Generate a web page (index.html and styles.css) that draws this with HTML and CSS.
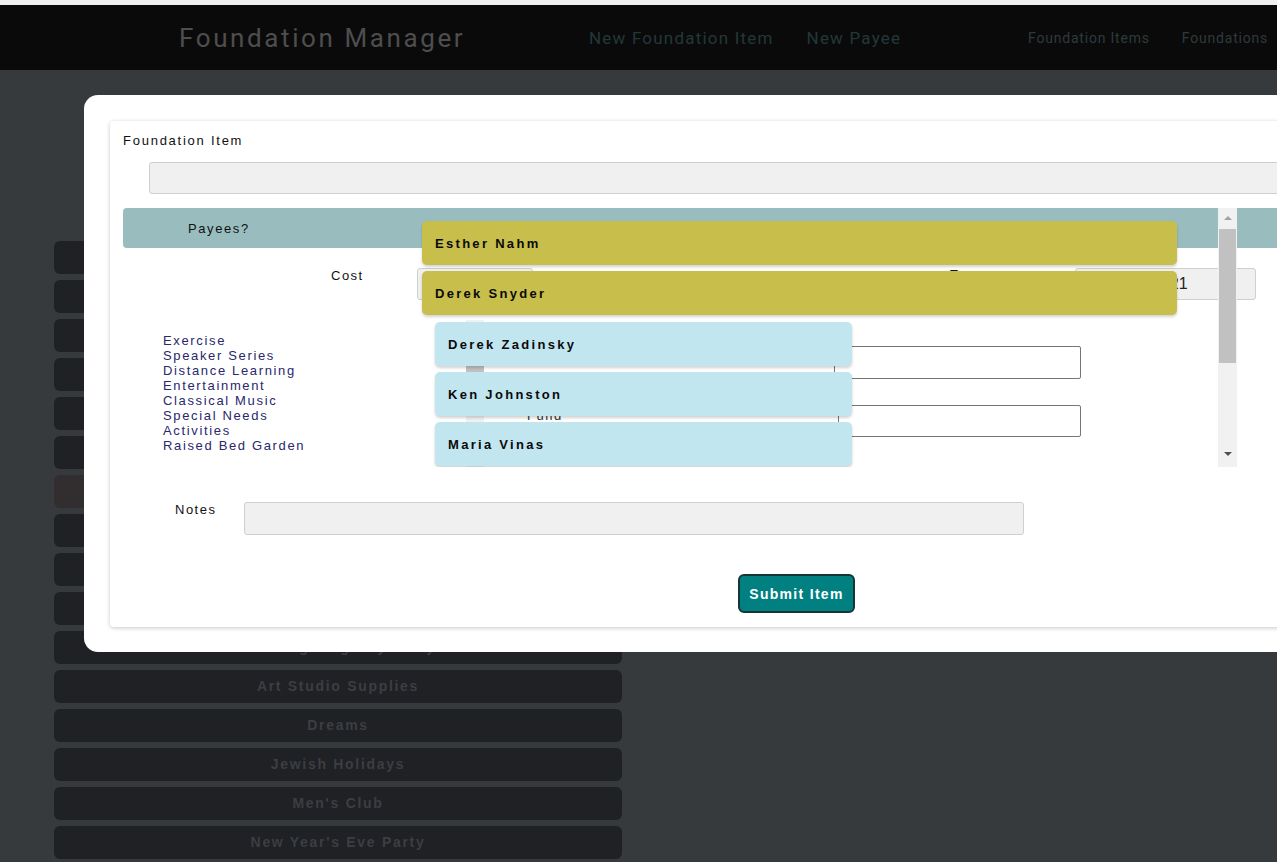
FILE: index.html
```html
<!DOCTYPE html>
<html lang="en">
<head>
<meta charset="utf-8">
<title>Foundation Manager</title>
<link rel="stylesheet" href="styles.css">
</head>
<body>
<div class="topline"></div>
<header class="header">
  <div class="brand">Foundation Manager</div>
  <nav class="nav-main">
    <a class="nav-big nav-first">New Foundation Item</a>
    <a class="nav-big">New Payee</a>
  </nav>
  <nav class="nav-side">
    <a class="nav-small">Foundation Items</a>
    <a class="nav-small">Foundations</a>
  </nav>
</header>

<main class="list">
  <div class="fbtn">Exercise</div>
  <div class="fbtn">Speaker Series</div>
  <div class="fbtn">Distance Learning</div>
  <div class="fbtn">Entertainment</div>
  <div class="fbtn">Classical Music</div>
  <div class="fbtn">Special Needs</div>
  <div class="fbtn fbtn-alt">Activities</div>
  <div class="fbtn">Raised Bed Garden</div>
  <div class="fbtn">Music Therapy</div>
  <div class="fbtn">Baking Club</div>
  <div class="fbtn">Thanksgiving Day Party</div>
  <div class="fbtn">Art Studio Supplies</div>
  <div class="fbtn">Dreams</div>
  <div class="fbtn">Jewish Holidays</div>
  <div class="fbtn">Men's Club</div>
  <div class="fbtn">New Year's Eve Party</div>
</main>

<div class="modal">
  <div class="card">
    <div class="lbl lbl-title">Foundation Item</div>
    <div class="inp inp-item"></div>
    <div class="payees-bar">Payees?</div>

    <div class="row-cost">
      <div class="lbl lbl-cost">Cost</div>
      <div class="inp inp-cost"></div>
      <div class="lbl lbl-total">Tax</div>
      <div class="inp inp-total">2021</div>
    </div>

    <div class="mid">
      <div class="cats">
        <div class="cats-text">
          <div>Exercise</div>
          <div>Speaker Series</div>
          <div>Distance Learning</div>
          <div>Entertainment</div>
          <div>Classical Music</div>
          <div>Special Needs</div>
          <div>Activities</div>
          <div>Raised Bed Garden</div>
        </div>
        <div class="cats-scroll"><div class="cats-thumb"></div></div>
      </div>
      <div class="fields">
        <div class="field field-1">
          <div class="lbl lbl-field">Purpose</div>
          <div class="box box-1"></div>
        </div>
        <div class="field field-2">
          <div class="lbl lbl-field">Fund</div>
          <div class="box box-2"></div>
        </div>
      </div>
    </div>

    <div class="row-notes">
      <div class="lbl lbl-notes">Notes</div>
      <div class="inp inp-notes"></div>
    </div>

    <div class="row-submit">
      <button class="submit">Submit Item</button>
    </div>

    <div class="dropdown">
      <div class="plist">
        <div class="pcard pcard-sel">Esther Nahm</div>
        <div class="pcard pcard-sel">Derek Snyder</div>
        <div class="pcard pcard-opt pcard-first">Derek Zadinsky</div>
        <div class="pcard pcard-opt">Ken Johnston</div>
        <div class="pcard pcard-opt">Maria Vinas</div>
      </div>
      <div class="vscroll">
        <div class="arrow-up"></div>
        <div class="vthumb"></div>
        <div class="arrow-down"></div>
      </div>
    </div>
  </div>
</div>
</body>
</html>
```

FILE: styles.css
```css
html, body {
  margin: 0;
  padding: 0;
  overflow: hidden;
  height: 862px;
}
body {
  background: #363a3d;
  font-family: "Liberation Sans", Arial, sans-serif;
  position: relative;
}
.topline {
  height: 5px;
  background: #f0f0f0;
}
.header {
  height: 65px;
  background: #0b0a0a;
  display: flex;
  align-items: center;
  font-family: Roboto, "Liberation Sans", sans-serif;
  white-space: nowrap;
}
.brand {
  flex: none;
  margin-left: 179px;
  width: 410px;
  font-size: 26px;
  letter-spacing: 2.6px;
  color: #4e4e4e;
}
.nav-main {
  flex: none;
  display: flex;
  width: 439px;
}
.nav-big {
  font-size: 17px;
  letter-spacing: 1.2px;
  color: #223838;
  margin-right: 33px;
}
.nav-side {
  flex: none;
  display: flex;
}
.nav-small {
  font-size: 14px;
  letter-spacing: 0.8px;
  color: #2d3b3d;
  margin-right: 32px;
}

.list {
  margin-top: 171px;
  padding-left: 54px;
  display: flex;
  flex-direction: column;
  gap: 6px;
}
.fbtn {
  width: 568px;
  height: 33px;
  box-sizing: border-box;
  padding-bottom: 2px;
  border-radius: 6px;
  background: #1f2124;
  color: #3b3e43;
  font-weight: bold;
  font-size: 14px;
  letter-spacing: 1.7px;
  display: flex;
  align-items: center;
  justify-content: center;
}
.fbtn-alt {
  background: #322d2e;
}

.modal {
  position: absolute;
  left: 84px;
  top: 95px;
  width: 1320px;
  background: #ffffff;
  border-radius: 14px;
  padding: 26px 0 25px 26px;
}
.card {
  position: relative;
  width: 1260px;
  height: 506px;
  box-sizing: border-box;
  padding-top: 12px;
  border-radius: 4px;
  background: #fff;
  box-shadow: 0 1px 4px rgba(0,0,0,0.22);
}
.lbl {
  font-size: 13px;
  line-height: 15px;
  letter-spacing: 1.5px;
  color: #111;
}
.lbl-title {
  margin-left: 13px;
  letter-spacing: 1.75px;
}
.inp {
  background: #f0f0f0;
  border: 1px solid #cfcfcf;
  border-radius: 3px;
  box-sizing: border-box;
}
.inp-item {
  margin: 14px 0 0 39px;
  height: 32px;
  width: 1200px;
}
.payees-bar {
  margin: 14px 0 0 13px;
  height: 40px;
  width: 1240px;
  background: #99bdbf;
  border-radius: 4px;
  display: flex;
  align-items: center;
  padding-left: 65px;
  box-sizing: border-box;
  font-size: 13px;
  letter-spacing: 1.6px;
  color: #111;
}
.row-cost {
  margin-top: 20px;
  display: flex;
  align-items: flex-start;
  height: 32px;
}
.lbl-cost {
  margin-left: 221px;
  width: 86px;
}
.inp-cost {
  width: 116px;
  height: 32px;
}
.lbl-total {
  margin-left: 417px;
  margin-top: -1px;
  width: 125px;
}
.inp-total {
  width: 181px;
  height: 32px;
  font-size: 16px;
  line-height: 30px;
  padding-left: 76px;
  color: #222;
}
.mid {
  margin: 20px 0 0 45px;
  display: flex;
  height: 147px;
}
.cats {
  width: 329px;
  display: flex;
}
.cats-text {
  flex: 1;
  padding: 13px 0 0 8px;
  font-size: 13px;
  line-height: 15px;
  letter-spacing: 1.65px;
  color: #28286b;
}
.cats-scroll {
  width: 18px;
  background: #f1f1f1;
  padding-top: 22px;
  box-sizing: border-box;
}
.cats-thumb {
  height: 70px;
  background: #c1c1c1;
}
.fields {
  margin-left: 43px;
  width: 554px;
  padding-top: 26px;
  display: flex;
  flex-direction: column;
  gap: 26px;
}
.field {
  display: flex;
  justify-content: space-between;
  align-items: flex-start;
}
.lbl-field {
  padding-top: 3px;
  color: #333;
}
.box {
  border: 1px solid #767676;
  border-radius: 2px;
  background: #fff;
  box-sizing: border-box;
}
.box-1 {
  width: 247px;
  height: 33px;
}
.box-2 {
  width: 243px;
  height: 32px;
}
.row-notes {
  margin-top: 35px;
  display: flex;
  align-items: flex-start;
}
.lbl-notes {
  margin-left: 65px;
  width: 69px;
}
.inp-notes {
  width: 780px;
  height: 33px;
}
.row-submit {
  margin-top: 39px;
  padding-left: 628px;
}
.submit {
  width: 117px;
  height: 39px;
  background: #008080;
  border: 2px solid #163636;
  border-radius: 6px;
  color: #fff;
  font-family: "Liberation Sans", Arial, sans-serif;
  font-weight: bold;
  font-size: 14px;
  letter-spacing: 1.3px;
  padding: 0;
}

.dropdown {
  position: absolute;
  left: 300px;
  top: 87px;
  width: 827px;
  height: 259px;
  overflow: hidden;
  display: flex;
}
.plist {
  flex: 1;
  padding-top: 13px;
  display: flex;
  flex-direction: column;
  gap: 6px;
}
.pcard {
  flex: none;
  height: 44px;
  border-radius: 5px;
  box-shadow: 0 2px 3px rgba(0,0,0,0.18);
  display: flex;
  align-items: center;
  padding-left: 13px;
  box-sizing: border-box;
  font-weight: bold;
  font-size: 13px;
  letter-spacing: 2.3px;
  color: #0a0a0a;
}
.pcard-sel {
  margin-left: 12px;
  width: 755px;
  background: #c8be4c;
}
.pcard-opt {
  margin-left: 25px;
  width: 417px;
  background: #c2e6ef;
}
.pcard-first {
  margin-top: 1px;
}
.vscroll {
  width: 19px;
  background: #f1f1f1;
  display: flex;
  flex-direction: column;
  align-items: center;
}
.arrow-up {
  margin-top: 8px;
  width: 0;
  height: 0;
  border-left: 4px solid transparent;
  border-right: 4px solid transparent;
  border-bottom: 4px solid #a3a3a3;
}
.vthumb {
  margin-top: 9px;
  width: 17px;
  height: 134px;
  background: #c1c1c1;
}
.arrow-down {
  margin-top: 89px;
  width: 0;
  height: 0;
  border-left: 4px solid transparent;
  border-right: 4px solid transparent;
  border-top: 4px solid #505050;
}
```
